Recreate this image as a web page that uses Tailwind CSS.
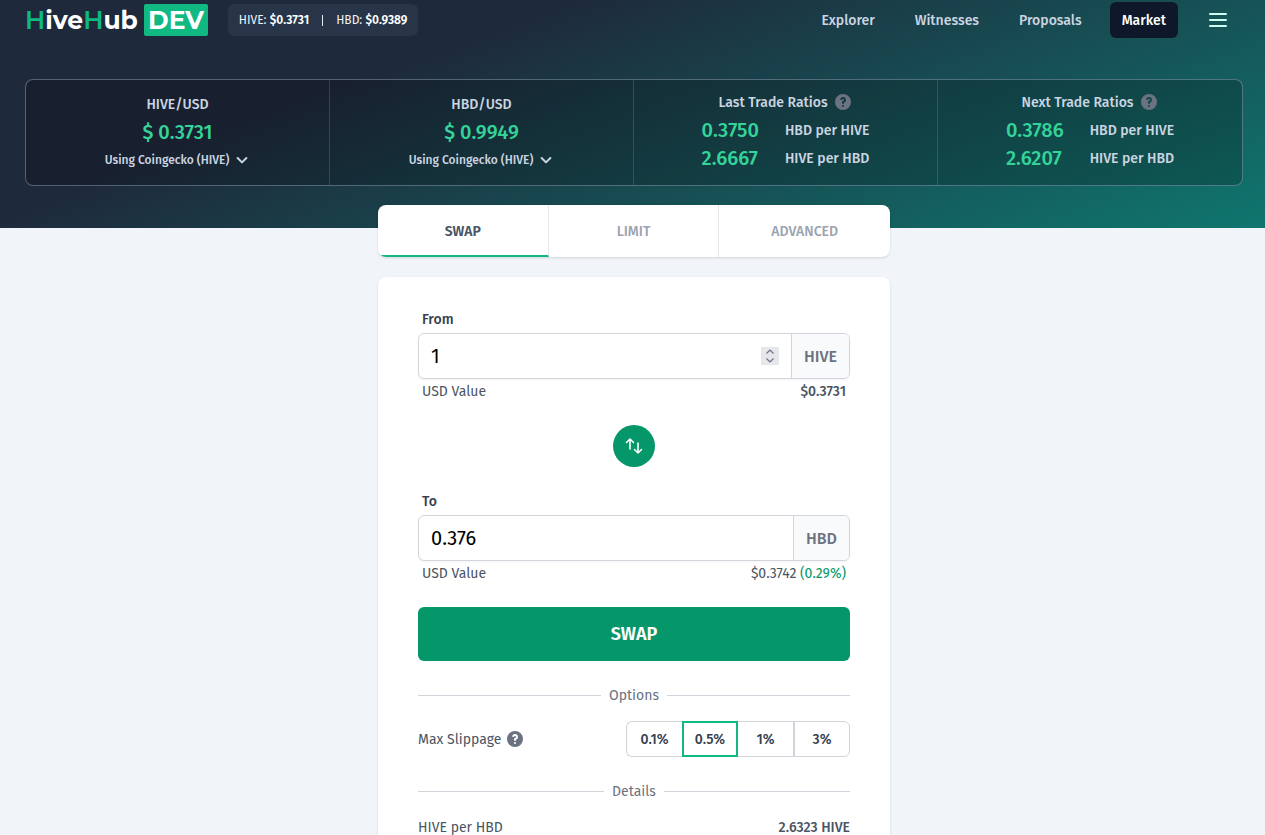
<!DOCTYPE html>
<html lang="en">
<head>
<meta charset="utf-8">
<meta name="viewport" content="width=device-width, initial-scale=1">
<title>HiveHub Market</title>
<script src="https://cdn.jsdelivr.net/npm/@tailwindcss/browser@4"></script>
</head>
<body class="min-h-screen overflow-x-hidden bg-[#f1f5f9] font-['Fira_Sans','Noto_Sans',sans-serif] text-sm text-[#4b5563]">
<svg class="hidden" aria-hidden="true">
  <symbol id="help" viewBox="0 0 20 20"><path fill="currentColor" fill-rule="evenodd" d="M18 10a8 8 0 11-16 0 8 8 0 0116 0zm-8-3a1 1 0 00-.867.5 1 1 0 11-1.731-1A3 3 0 0113 8a3.001 3.001 0 01-2 2.83V11a1 1 0 11-2 0v-1a1 1 0 011-1 1 1 0 100-2zm0 8a1 1 0 100-2 1 1 0 000 2z" clip-rule="evenodd"/></symbol>
  <symbol id="chevron" viewBox="0 0 20 20"><path fill="none" stroke="currentColor" stroke-width="2.5" stroke-linecap="round" stroke-linejoin="round" d="M4.500 7.500 10 13l5.500-5.500"/></symbol>
</svg>

<header class="h-[228px] bg-[linear-gradient(159deg,#1e293b_0%,#1e293b_30%,#0f766e_100%)] pr-[22px] pl-[25px]">
  <nav class="flex h-10 items-center justify-between">
    <div class="flex items-center gap-5">
      <a href="#" class="flex items-center gap-1 font-['Montserrat','Inter',sans-serif] text-[25px] leading-8 font-bold text-white">
        <span class="w-[115px]"><span class="font-semibold text-[#10b981]">H</span>ive<span class="font-semibold text-[#10b981]">H</span>ub</span>
        <span class="rounded-xs bg-[#10b981] px-1">DEV</span>
      </a>
      <div class="flex h-8 items-center gap-[13px] rounded-md bg-[#283548] px-[11px] text-xs text-slate-100">
        <span>HIVE: <b class="font-semibold text-white">$0.3731</b></span>
        <span class="h-[11px] w-px bg-slate-200"></span>
        <span>HBD: <b class="font-semibold text-white">$0.9389</b></span>
      </div>
    </div>
    <div class="flex items-center gap-4 pr-[13px] font-medium text-[#cbd5e1]">
      <a href="#" class="px-3 pt-[9px] pb-[7px]">Explorer</a>
      <a href="#" class="px-3 pt-[9px] pb-[7px]">Witnesses</a>
      <a href="#" class="px-3 pt-[9px] pb-[7px]">Proposals</a>
      <a href="#" class="rounded-md bg-slate-900 px-3 pt-[9px] pb-[7px] text-white">Market</a>
      <button class="ml-3 text-teal-100" aria-label="Menu"><svg class="size-6" viewBox="0 0 24 24" fill="none" stroke="currentColor" stroke-width="2" stroke-linecap="round"><path d="M4 6h16M4 12h16M4 18h16"/></svg></button>
    </div>
  </nav>

  <section class="mt-[39px] grid h-[107px] grid-cols-4 divide-x divide-slate-400/25 rounded-lg border border-slate-400/50 bg-black/20 font-medium text-[#cbd5e1]">
    <div class="flex flex-col items-center pt-[14px]">
      <h2 class="leading-[22px]">HIVE/USD</h2>
      <p class="mt-0.5 text-xl leading-7 text-[#34d399]">$ 0.3731</p>
      <button class="mt-1 flex items-center gap-[5px] text-xs leading-5">Using Coingecko (HIVE) <svg class="size-4"><use href="#chevron"/></svg></button>
    </div>
    <div class="flex flex-col items-center pt-[14px]">
      <h2 class="leading-[22px]">HBD/USD</h2>
      <p class="mt-0.5 text-xl leading-7 text-[#34d399]">$ 0.9949</p>
      <button class="mt-1 flex items-center gap-[5px] text-xs leading-5">Using Coingecko (HIVE) <svg class="size-4"><use href="#chevron"/></svg></button>
    </div>
    <div class="flex flex-col items-center pt-3">
      <h2 class="flex items-start gap-[5px] leading-[22px]">Last Trade Ratios <svg class="size-5 text-[#6b7280]"><use href="#help"/></svg></h2>
      <dl class="mt-0.5 grid grid-cols-[auto_auto] gap-x-[26px]">
        <dt class="text-xl leading-7 text-[#34d399]">0.3750</dt><dd class="pt-[3px] leading-6">HBD per HIVE</dd>
        <dt class="text-xl leading-7 text-[#34d399]">2.6667</dt><dd class="pt-[3px] leading-6">HIVE per HBD</dd>
      </dl>
    </div>
    <div class="flex flex-col items-center pt-3">
      <h2 class="flex items-start gap-[5px] leading-[22px]">Next Trade Ratios <svg class="size-5 text-[#6b7280]"><use href="#help"/></svg></h2>
      <dl class="mt-0.5 grid grid-cols-[auto_auto] gap-x-[26px]">
        <dt class="text-xl leading-7 text-[#34d399]">0.3786</dt><dd class="pt-[3px] leading-6">HBD per HIVE</dd>
        <dt class="text-xl leading-7 text-[#34d399]">2.6207</dt><dd class="pt-[3px] leading-6">HIVE per HBD</dd>
      </dl>
    </div>
  </section>
</header>

<main class="-mt-[23px] pl-[3px]">
 <div class="mx-auto w-full max-w-lg">
  <div class="grid grid-cols-3 divide-x divide-gray-200 overflow-hidden rounded-lg bg-white font-medium text-[#9ca3af] shadow" role="tablist">
    <button class="border-b-2 border-b-[#10b981] pt-[17px] pb-[13px] font-semibold text-[#4b5563]" role="tab" aria-selected="true">SWAP</button>
    <button class="pt-[17px] pb-[15px]" role="tab">LIMIT</button>
    <button class="pt-[17px] pb-[15px]" role="tab">ADVANCED</button>
  </div>

  <form class="mt-5 rounded-lg bg-white px-10 pt-8 pb-10 shadow">
    <label for="from" class="block px-1 leading-[22px] font-medium text-[#374151]">From</label>
    <div class="mt-0.5 flex h-[46px] overflow-hidden rounded-md border border-[#d1d5db] shadow-xs">
      <div class="flex min-w-0 flex-1 items-center pr-3">
        <input id="from" inputmode="decimal" value="1" class="min-w-0 flex-1 px-3 text-xl text-black outline-none">
        <button type="button" class="bg-gray-200 text-[#6b7280]" aria-label="Change amount"><svg class="size-[18px]" viewBox="0 0 18 18" fill="none" stroke="currentColor" stroke-width="1.200"><path d="M5.500 6.500 9 3l3.500 3.500M5.500 11.500 9 15l3.500-3.500"/></svg></button>
      </div>
      <span class="flex items-center border-l border-[#d1d5db] bg-[#f9fafb] px-3 pt-0.5 text-base font-medium text-[#6b7280]">HIVE</span>
    </div>
    <div class="mt-0.5 flex justify-between px-1 leading-[22px]"><span>USD Value</span><span class="font-medium">$0.3731</span></div>

    <button type="button" class="mx-auto mt-[22px] flex size-[42px] items-center justify-center rounded-full bg-[#059669] text-white" aria-label="Switch currencies"><svg class="size-5" viewBox="0 0 20 20" fill="none" stroke="currentColor" stroke-width="1.600" stroke-linecap="round" stroke-linejoin="round"><path d="M6 13V3M2.500 6.500 6 3l3.500 3.500M14 7v10M10.500 13.500 14 17l3.500-3.500"/></svg></button>

    <label for="to" class="mt-6 block px-1 leading-[22px] font-medium text-[#374151]">To</label>
    <div class="mt-0.5 flex h-[46px] overflow-hidden rounded-md border border-[#d1d5db] shadow-xs">
      <input id="to" inputmode="decimal" value="0.376" class="min-w-0 flex-1 px-3 text-xl text-black outline-none">
      <span class="flex items-center border-l border-[#d1d5db] bg-[#f9fafb] px-3 pt-0.5 text-base font-medium text-[#6b7280]">HBD</span>
    </div>
    <div class="mt-0.5 flex justify-between px-1 leading-[22px]"><span>USD Value</span><span>$0.3742 <span class="text-[#059669]">(0.29%)</span></span></div>

    <button type="button" class="mt-[22px] h-[54px] w-full rounded-md bg-[#059669] text-lg font-semibold text-white">SWAP</button>

    <div class="mt-6 flex items-center gap-2 text-[#6b7280]"><span class="h-px flex-1 bg-[#d1d5db]"></span><span class="pt-0.5 leading-[18px]">Options</span><span class="h-px flex-1 bg-[#d1d5db]"></span></div>

    <div class="mt-4 flex items-center justify-between">
      <span class="flex items-center gap-1"><span class="pt-0.5">Max Slippage</span> <svg class="size-5 text-[#6b7280]"><use href="#help"/></svg></span>
      <div class="grid h-9 grid-cols-4 font-medium text-[#374151]">
        <button type="button" class="w-14 rounded-l-md border border-r-0 border-[#d1d5db] pt-0.5">0.1%</button>
        <button type="button" class="w-14 border-2 border-[#10b981] pt-0.5">0.5%</button>
        <button type="button" class="w-14 border border-l-0 border-[#d1d5db] pt-0.5">1%</button>
        <button type="button" class="w-14 rounded-r-md border border-[#d1d5db] pt-0.5">3%</button>
      </div>
    </div>

    <div class="mt-6 flex items-center gap-2 text-[#6b7280]"><span class="h-px flex-1 bg-[#d1d5db]"></span><span class="pt-0.5 leading-[18px]">Details</span><span class="h-px flex-1 bg-[#d1d5db]"></span></div>

    <div class="mt-4 flex justify-between leading-[22px]"><span>HIVE per HBD</span><span class="font-medium">2.6323 HIVE</span></div>
  </form>
 </div>
</main>
</body>
</html>
